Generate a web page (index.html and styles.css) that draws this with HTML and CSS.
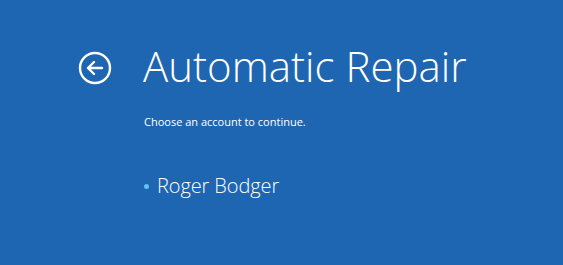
FILE: index.html
```html
<!DOCTYPE html>
<html lang="en">
<head>
    <meta charset="UTF-8">
    <title>Automatic Repair</title>
    <link rel="stylesheet" href="styles.css">
</head>
<body>
    <div class="screen">
        <div class="header">
            <button class="back" aria-label="Back">
                <svg width="34" height="34" viewBox="0 0 34 34">
                    <circle cx="17" cy="17" r="15" fill="none" stroke="#fff" stroke-width="2.4"/>
                    <path d="M10 17 H24 M16 11 L10 17 L16 23" fill="none" stroke="#fff" stroke-width="2.4" stroke-linecap="round" stroke-linejoin="round"/>
                </svg>
            </button>
            <h1>Automatic Repair</h1>
        </div>
        <div class="content">
            <p class="hint">Choose an account to continue.</p>
            <ul class="accounts">
                <li>Roger Bodger</li>
            </ul>
        </div>
    </div>
</body>
</html>
```

FILE: styles.css
```css
html, body {
    margin: 0;
    height: 100%;
}
body {
    background-color: #1f66b2;
    color: #fff;
    font-family: "Open Sans", "Liberation Sans", sans-serif;
}
.screen {
    padding: 38px 0 0 78px;
}
.header {
    display: flex;
    align-items: center;
    gap: 31px;
}
.back {
    background: none;
    border: none;
    padding: 0;
    width: 34px;
    height: 34px;
    margin-top: 4px;
}
.back svg {
    display: block;
}
h1 {
    margin: 0;
    font-weight: 300;
    font-size: 42px;
    line-height: 56px;
}
.content {
    padding-left: 66px;
}
.hint {
    margin: 20px 0 0;
    font-size: 11px;
    line-height: 16px;
}
.accounts {
    list-style: none;
    margin: 42px 0 0;
    padding: 0;
}
.accounts li {
    display: flex;
    align-items: center;
    gap: 8px;
    font-size: 20px;
    font-weight: 300;
    line-height: 28px;
    letter-spacing: -0.1px;
}
.accounts li::before {
    content: "";
    width: 5px;
    height: 5px;
    border-radius: 50%;
    background-color: #5cc4f2;
}
```
